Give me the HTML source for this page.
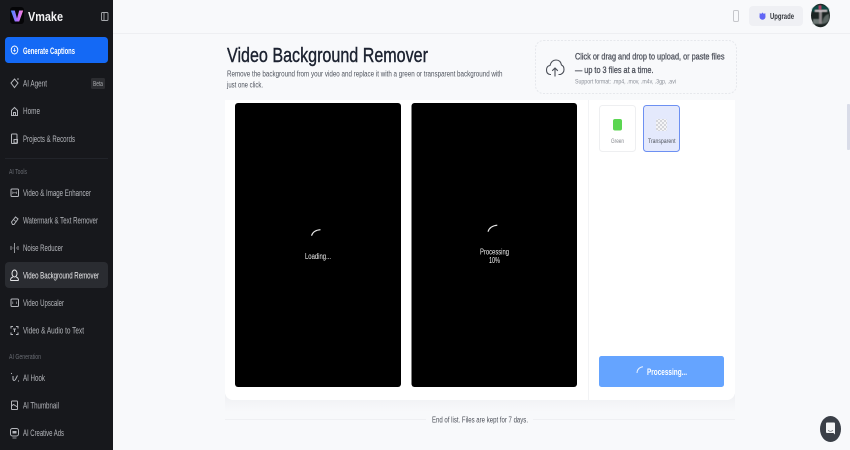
<!DOCTYPE html>
<html lang="en"><head><meta charset="utf-8"><title>Video Background Remover</title>
<style>
html,body{margin:0;padding:0;width:850px;height:450px;overflow:hidden;background:#f8f9fb}
svg{display:block}
text{font-family:"Liberation Sans",sans-serif}
.n{font-size:9px;fill:#b4b6bb}
.g{font-size:7.400px;fill:#686b72}
.i{fill:none;stroke:#b4b6bb;stroke-width:1}
</style></head><body>
<svg width="850" height="450" viewBox="0 0 850 450" xmlns="http://www.w3.org/2000/svg">
<defs>
<linearGradient id="lg" x1="0" y1="0" x2="1" y2="0"><stop offset="0" stop-color="#3f8cff"/><stop offset=".55" stop-color="#b86bff"/><stop offset="1" stop-color="#ff86d8"/></linearGradient>
<linearGradient id="sh" x1="0" y1="0" x2="0" y2="1"><stop offset="0" stop-color="#eff0f3"/><stop offset="1" stop-color="#f8f9fb"/></linearGradient>
<pattern id="ck" width="4" height="4" patternUnits="userSpaceOnUse"><rect width="4" height="4" fill="#f4f4f6"/><rect width="2" height="2" fill="#d4d5da"/><rect x="2" y="2" width="2" height="2" fill="#d4d5da"/></pattern>
<filter id="b" x="-10%" y="-10%" width="120%" height="120%"><feGaussianBlur stdDeviation=".6"/></filter>
</defs>
<rect width="850" height="450" fill="#f8f9fb"/>
<!-- header -->
<rect x="113" y="33" width="737" height="1" fill="#eeeff2"/>
<rect x="733.500" y="10.500" width="5" height="11" rx="1.200" fill="none" stroke="#c6c7cb" stroke-width="1"/>
<rect x="749" y="6" width="54" height="20" rx="4" fill="#eff0f4"/>
<path d="M762.500 12.500l1.300 1.400 1.500-.8.200 3.700a3 3 0 0 1-6 0l.2-3.700 1.500.8z" fill="#6166f5"/>
<text x="770" y="18.800" font-size="8.400" font-weight="700" fill="#33363c" textLength="24" lengthAdjust="spacingAndGlyphs">Upgrade</text>
<ellipse cx="820.500" cy="15.500" rx="9.500" ry="11.800" fill="#1b2422"/>
<g filter="url(#b)">
<path d="M812 9q8-8 17 0l-1 3h-15z" fill="#0f4c46"/>
<rect x="815" y="10" width="12" height="2" fill="#c7c0c4"/>
<rect x="819" y="12" width="3" height="12" fill="#8f8a8d"/>
<path d="M822 24q1-9 7-10v6q-2 4-7 4z" fill="#5b6664"/>
<rect x="813" y="19" width="6" height="5" fill="#6d7774"/>
<rect x="819" y="5.500" width="2" height="4" fill="#c23a6e"/>
</g>
<!-- sidebar -->
<rect width="113" height="450" fill="#17181c"/>
<rect x="10" y="7" width="14" height="17" rx="3" fill="#050507"/>
<path d="M10.800 10.500h4l2.200 8 2.200-8h4l-4 11h-4.400z" fill="url(#lg)"/>
<text x="28" y="21" font-size="13" font-weight="700" fill="#f2f2f3" textLength="35" lengthAdjust="spacingAndGlyphs">Vmake</text>
<rect x="101.500" y="12.500" width="6.500" height="8" rx="1" fill="none" stroke="#a7a9ad" stroke-width=".9"/><path d="M104 12.500v8" stroke="#a7a9ad" stroke-width=".9"/>
<rect x="5" y="37" width="103" height="26" rx="3.500" fill="#1469f5"/>
<ellipse cx="14.500" cy="50" rx="3.300" ry="4" fill="none" stroke="#fff" stroke-width=".9"/><path d="M14.500 48v3.500M13.300 50.300l1.200 1.200 1.200-1.200" fill="none" stroke="#fff" stroke-width=".7"/>
<text x="23" y="53.800" font-size="9" font-weight="700" fill="#fff" textLength="52" lengthAdjust="spacingAndGlyphs">Generate Captions</text>

<path class="i" d="M14.500 79l3.500 4-3.500 4.500-3.500-4.500z"/><circle cx="18" cy="79" r=".8" fill="#b4b6bb"/>
<text class="n" x="23" y="86.500" textLength="24" lengthAdjust="spacingAndGlyphs">AI Agent</text>
<rect x="91" y="78" width="14" height="11" rx="1.500" fill="#2c2d31"/>
<text x="93" y="86" font-size="7.600" fill="#a6a8ac" textLength="10" lengthAdjust="spacingAndGlyphs">Beta</text>

<path class="i" d="M11.500 110.500l3-3 3 3v5h-6zM13.500 115.500v-3h2v3"/>
<text class="n" x="23" y="114" textLength="17" lengthAdjust="spacingAndGlyphs">Home</text>

<rect class="i" x="11.500" y="134" width="5.500" height="9.500" rx=".8"/><rect class="i" x="14" y="139.500" width="3.500" height="3.500"/>
<text class="n" x="23" y="141.800" textLength="52" lengthAdjust="spacingAndGlyphs">Projects &amp; Records</text>

<rect x="5" y="158" width="103" height="1" fill="#22242a"/>
<text class="g" x="9" y="174" textLength="18" lengthAdjust="spacingAndGlyphs">AI Tools</text>

<rect class="i" x="11" y="189" width="7.500" height="7.500" rx="1"/><path d="M12.800 191.500v2.500M16.500 191.500v2.500M12.800 192.800h3.700" stroke="#b4b6bb" stroke-width=".6"/>
<text class="n" x="23" y="196" textLength="68" lengthAdjust="spacingAndGlyphs">Video &amp; Image Enhancer</text>

<path class="i" d="M11.500 222l4-5 2.500 2-4 5.500h-1.500z"/><path d="M13.500 219.500l3 2.500" stroke="#b4b6bb" stroke-width=".8"/>
<text class="n" x="23" y="223.700" textLength="75" lengthAdjust="spacingAndGlyphs">Watermark &amp; Text Remover</text>

<path d="M14.500 243v10M11 246v4M18 246v4M12.500 248h.9M16 248h.9" stroke="#b4b6bb" stroke-width=".8" fill="none"/>
<text class="n" x="23" y="251" textLength="40" lengthAdjust="spacingAndGlyphs">Noise Reducer</text>

<rect x="5" y="262" width="103" height="26" rx="4" fill="#2a2c31"/>
<ellipse class="i" style="stroke:#e3e4e6" cx="14.500" cy="273.500" rx="2.500" ry="3.500"/><path d="M10.500 280.500q0-3 2.500-3.500M18.500 280.500q0-3-2.500-3.500M10.500 280.500h8" fill="none" stroke="#e3e4e6" stroke-width=".9"/>
<text x="23" y="278.600" font-size="9" fill="#eeeef0" textLength="76" lengthAdjust="spacingAndGlyphs">Video Background Remover</text>

<rect class="i" x="11" y="299" width="7.500" height="7.500" rx="1"/><path d="M12.800 301.500v2.500M16.500 301.500v2.500" stroke="#b4b6bb" stroke-width=".6"/>
<text class="n" x="23" y="306" textLength="41" lengthAdjust="spacingAndGlyphs">Video Upscaler</text>

<path class="i" d="M11 328.500v-2h2M16 326.500h2v2M11 332.500v2h2M16 334.500h2v-2M13 329h3M14.500 329v3"/>
<text class="n" x="23" y="333.500" textLength="61" lengthAdjust="spacingAndGlyphs">Video &amp; Audio to Text</text>

<text class="g" x="9" y="359" textLength="32" lengthAdjust="spacingAndGlyphs">AI Generation</text>

<path class="i" d="M13 376v3.500q1 2 2.500 0l2-4"/><circle cx="11.500" cy="373.500" r=".6" fill="#b4b6bb"/><circle cx="18.500" cy="381" r=".6" fill="#b4b6bb"/>
<text class="n" x="23" y="381" textLength="22" lengthAdjust="spacingAndGlyphs">AI Hook</text>

<rect class="i" x="11.500" y="401" width="6" height="8.500" rx=".8"/><path class="i" d="M11.500 406l2-1.500 4 2.500"/>
<text class="n" x="23" y="408.300" textLength="36" lengthAdjust="spacingAndGlyphs">AI Thumbnail</text>

<rect class="i" x="10.500" y="428.500" width="8" height="7.500" rx="2"/><path d="M12.500 438h4" stroke="#b4b6bb" stroke-width=".8"/><path d="M12.500 431h4v2.500h-4z" fill="#b4b6bb"/>
<text class="n" x="23" y="436" textLength="41" lengthAdjust="spacingAndGlyphs">AI Creative Ads</text>

<!-- page heading -->
<text x="227" y="62" font-size="20" fill="#1c2230" stroke="#1c2230" stroke-width=".4" textLength="201" lengthAdjust="spacingAndGlyphs">Video Background Remover</text>
<text x="227" y="76.500" font-size="7.800" fill="#4f545e" textLength="275.500" lengthAdjust="spacingAndGlyphs">Remove the background from your video and replace it with a green or transparent background with</text>
<text x="227" y="87.500" font-size="7.800" fill="#4f545e" textLength="36" lengthAdjust="spacingAndGlyphs">just one click.</text>

<!-- upload -->
<rect x="535.500" y="40.500" width="201" height="53" rx="8" fill="#f8f9fb" stroke="#e6e8ec" stroke-dasharray="2 1.500"/>
<path d="M551 74.500h-1q-3.500-.5-3.500-4.500t3.500-4.500q1.500-5.500 6-5.500t5.500 5q2.500 1 2.500 4.500t-3.500 5h-2" fill="none" stroke="#4a4e57" stroke-width="1.100"/>
<path d="M555 76.500v-8.500M552.200 70.800l2.800-2.800 2.800 2.800" fill="none" stroke="#4a4e57" stroke-width="1.100"/>
<text x="575" y="59.500" font-size="9" fill="#4d515b" stroke="#4d515b" stroke-width=".28" textLength="149.500" lengthAdjust="spacingAndGlyphs">Click or drag and drop to upload, or paste files</text>
<text x="575" y="73" font-size="9" fill="#4d515b" stroke="#4d515b" stroke-width=".28" textLength="78.500" lengthAdjust="spacingAndGlyphs">— up to 3 files at a time.</text>
<text x="575" y="83.500" font-size="6.800" fill="#8b8f98" textLength="101" lengthAdjust="spacingAndGlyphs">Support format: .mp4, .mov, .m4v, .3gp, .avi</text>

<!-- card -->
<rect x="225" y="394" width="510" height="18" fill="url(#sh)"/>
<path d="M225 100h510v292a8 8 0 0 1-8 8h-494a8 8 0 0 1-8-8z" fill="#fff"/>
<rect x="588" y="100" width="1" height="300" fill="#f2f3f5"/>
<rect x="235" y="103" width="166" height="284" rx="3" fill="#000"/>
<rect x="411.500" y="103" width="165.500" height="284" rx="3" fill="#000"/>
<path d="M311.500 235.700q1.800-5.500 9-6" fill="none" stroke="#e6e6e6" stroke-width="1.200"/>
<text x="305" y="258.800" font-size="8" fill="#f2f2f2" textLength="26" lengthAdjust="spacingAndGlyphs">Loading...</text>
<path d="M488 231.700q1.800-5.800 9.300-6.500" fill="none" stroke="#e6e6e6" stroke-width="1.200"/>
<text x="480" y="254.500" font-size="8" fill="#f2f2f2" textLength="29" lengthAdjust="spacingAndGlyphs">Processing</text>
<text x="489" y="263" font-size="8" fill="#f2f2f2" textLength="11" lengthAdjust="spacingAndGlyphs">10%</text>

<!-- options -->
<rect x="599.500" y="105.500" width="36" height="46" rx="3" fill="#fff" stroke="#eeeff1"/>
<rect x="613" y="119" width="9" height="11.500" rx="2" fill="#5bd651"/>
<text x="611" y="143" font-size="6.800" fill="#85888e" textLength="13" lengthAdjust="spacingAndGlyphs">Green</text>
<rect x="643.500" y="105.500" width="36" height="46" rx="3" fill="#e4e9fc" stroke="#6d90f2"/>
<rect x="656" y="119" width="11" height="12" rx="2" fill="url(#ck)"/>
<text x="648" y="143" font-size="6.800" fill="#50545c" textLength="27.500" lengthAdjust="spacingAndGlyphs">Transparent</text>

<rect x="599" y="356" width="125" height="31" rx="2.500" fill="#65a4ff"/>
<path d="M637 373q.3-5.500 6-6.300" fill="none" stroke="#e6f0ff" stroke-width="1"/>
<text x="647" y="375" font-size="9" font-weight="700" fill="#fff" textLength="40" lengthAdjust="spacingAndGlyphs">Processing...</text>

<!-- end of list -->
<rect x="225" y="419" width="201" height="1" fill="#eff0f3"/>
<rect x="533" y="419" width="202" height="1" fill="#eff0f3"/>
<text x="432" y="422.300" font-size="8" fill="#4c5059" textLength="96" lengthAdjust="spacingAndGlyphs">End of list. Files are kept for 7 days.</text>

<!-- chat + scrollbar -->
<rect x="847" y="104" width="3" height="46" rx="1" fill="#d9dce8"/>
<ellipse cx="830.500" cy="429" rx="10.500" ry="13" fill="#3a3f47"/>
<path d="M826 423.500q0-1 1-1h7q1 0 1 1v11l-1.500-1.500h-6.500q-1 0-1-1z" fill="#f4f5f6"/>
<path d="M828 430.500q2.500 1.500 5 0" fill="none" stroke="#3a3f47" stroke-width=".6"/>
</svg>
</body></html>
